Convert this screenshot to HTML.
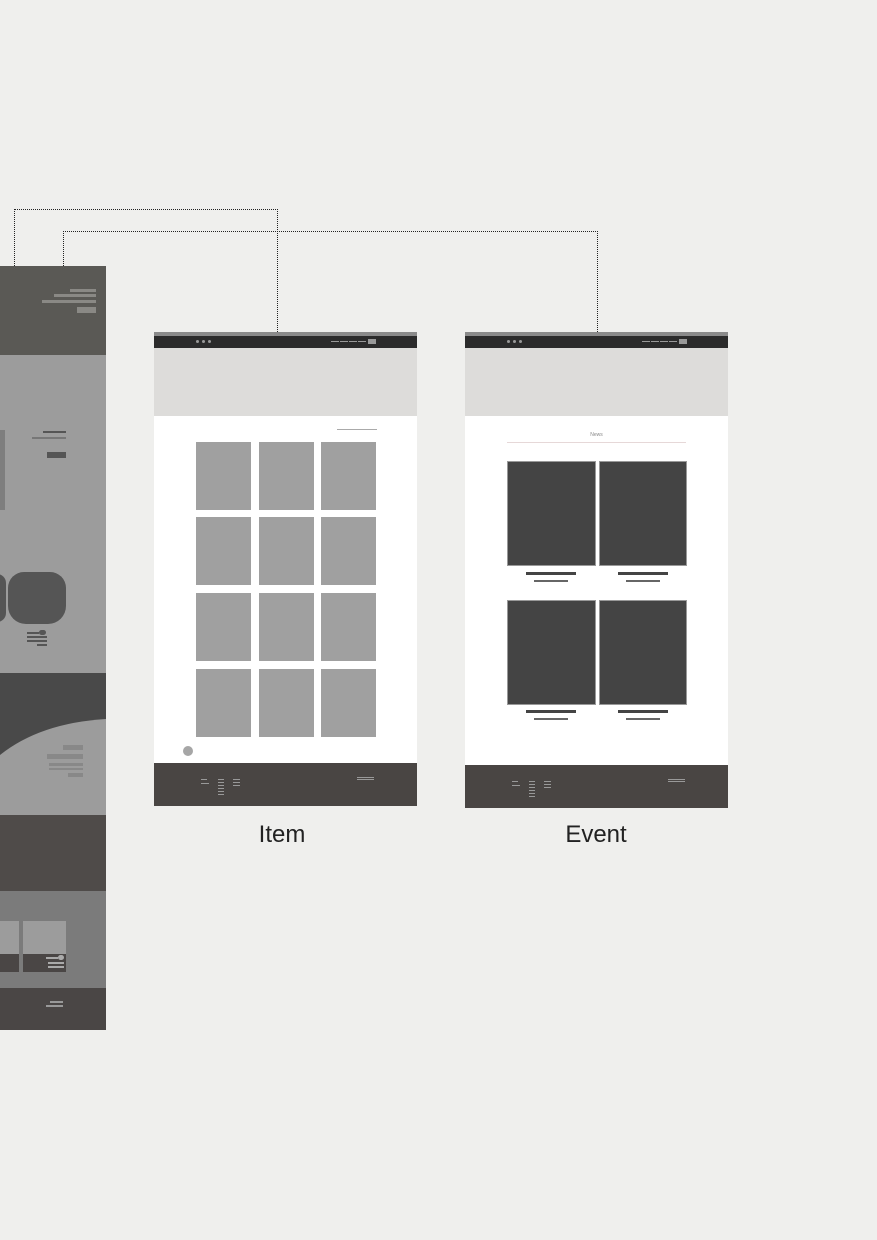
<!DOCTYPE html>
<html><head><meta charset="utf-8"><style>
*{margin:0;padding:0;box-sizing:border-box}
body{width:877px;height:1240px;background:#efefed;position:relative;overflow:hidden;font-family:"Liberation Sans",sans-serif}
.a{position:absolute}
.dl{position:absolute;border-color:#222;border-style:dotted;border-width:0}
</style></head><body>
<div class="dl" style="left:14px;top:209px;width:264px;height:1px;border-top-width:1px"></div>
<div class="dl" style="left:14px;top:209px;width:1px;height:57px;border-left-width:1px"></div>
<div class="dl" style="left:277px;top:209px;width:1px;height:123px;border-left-width:1px"></div>
<div class="dl" style="left:63px;top:231px;width:535px;height:1px;border-top-width:1px"></div>
<div class="dl" style="left:63px;top:231px;width:1px;height:35px;border-left-width:1px"></div>
<div class="dl" style="left:597px;top:231px;width:1px;height:101px;border-left-width:1px"></div>

<div class="a" style="left:0;top:266px;width:106px;height:764px;overflow:hidden">
 <div class="a" style="left:0;top:0;width:106px;height:89px;background:#5a5955"></div>
 <div class="a" style="left:70px;top:23px;width:26px;height:3px;background:#8a8985"></div>
 <div class="a" style="left:54px;top:28px;width:42px;height:3px;background:#8a8985"></div>
 <div class="a" style="left:42px;top:34px;width:54px;height:3px;background:#8a8985"></div>
 <div class="a" style="left:77px;top:41px;width:19px;height:6px;background:#8a8985"></div>
 <div class="a" style="left:0;top:89px;width:106px;height:318px;background:#9c9c9c"></div>
 <div class="a" style="left:0;top:164px;width:5px;height:80px;background:#7e7e7e"></div>
 <div class="a" style="left:43px;top:165px;width:23px;height:2px;background:#555"></div>
 <div class="a" style="left:32px;top:171px;width:34px;height:2px;background:#777"></div>
 <div class="a" style="left:47px;top:186px;width:19px;height:6px;background:#555"></div>
 <div class="a" style="left:-12px;top:308px;width:18px;height:48px;border-radius:10px;background:#555"></div>
 <div class="a" style="left:8px;top:306px;width:58px;height:52px;border-radius:16px 16px 18px 18px;background:#555"></div>
 <div class="a" style="left:27px;top:366px;width:12px;height:2px;background:#555"></div>
 <div class="a" style="left:39px;top:364px;width:7px;height:5px;border-radius:3px;background:#555"></div>
 <div class="a" style="left:27px;top:370px;width:20px;height:2px;background:#555"></div>
 <div class="a" style="left:27px;top:374px;width:20px;height:2px;background:#555"></div>
 <div class="a" style="left:37px;top:378px;width:10px;height:2px;background:#555"></div>
 <div class="a" style="left:0;top:407px;width:106px;height:142px;background:#494949"></div>
 <svg class="a" style="left:0;top:407px" width="106" height="142"><path d="M0 82 Q40 50 106 46 L106 142 L0 142Z" fill="#9c9c9c"/></svg>
 <div class="a" style="left:63px;top:479px;width:20px;height:5px;background:#888"></div>
 <div class="a" style="left:47px;top:488px;width:36px;height:5px;background:#888"></div>
 <div class="a" style="left:49px;top:497px;width:34px;height:3px;background:#888"></div>
 <div class="a" style="left:49px;top:502px;width:34px;height:2px;background:#888"></div>
 <div class="a" style="left:68px;top:507px;width:15px;height:4px;background:#888"></div>
 <div class="a" style="left:0;top:549px;width:106px;height:76px;background:#4f4b49"></div>
 <div class="a" style="left:0;top:625px;width:106px;height:97px;background:#7b7b7b"></div>
 <div class="a" style="left:0;top:655px;width:19px;height:33px;background:#9c9c9c"></div>
 <div class="a" style="left:0;top:688px;width:19px;height:18px;background:#4a4645"></div>
 <div class="a" style="left:23px;top:655px;width:43px;height:33px;background:#9c9c9c"></div>
 <div class="a" style="left:23px;top:688px;width:43px;height:18px;background:#4a4645"></div>
 <div class="a" style="left:46px;top:691px;width:12px;height:2px;background:#aaa"></div>
 <div class="a" style="left:58px;top:689px;width:6px;height:5px;border-radius:3px;background:#aaa"></div>
 <div class="a" style="left:48px;top:696px;width:16px;height:2px;background:#aaa"></div>
 <div class="a" style="left:48px;top:700px;width:16px;height:2px;background:#aaa"></div>
 <div class="a" style="left:0;top:722px;width:106px;height:42px;background:#4a4645"></div>
 <div class="a" style="left:50px;top:735px;width:13px;height:2px;background:#999"></div>
 <div class="a" style="left:46px;top:739px;width:17px;height:2px;background:#999"></div>
</div>

<div class="a" style="left:154px;top:332px;width:263px;height:474px;background:#fff">
 <div class="a" style="left:0;top:0;width:263px;height:4px;background:#8a8a8a"></div>
 <div class="a" style="left:0;top:4px;width:263px;height:12px;background:#2b2b2b"></div>
 <div class="a" style="left:42px;top:8px;width:3px;height:3px;border-radius:2px;background:#999;box-shadow:6px 0 #999,12px 0 #999"></div>
 <div class="a" style="left:177px;top:9px;width:8px;height:1px;background:#999;box-shadow:9px 0 #999,18px 0 #999,27px 0 #999"></div>
 <div class="a" style="left:214px;top:7px;width:8px;height:5px;background:#999"></div>
 <div class="a" style="left:0;top:16px;width:263px;height:68px;background:#dddcda"></div>
 <div class="a" style="left:183px;top:97px;width:40px;height:1px;background:#aaa"></div>
 <div class="a" style="left:0;top:431px;width:263px;height:43px;background:#494543"></div>
 <div class="a" style="left:29px;top:414px;width:10px;height:10px;border-radius:50%;background:#a6a6a6"></div>
 <div class="a" style="left:47px;top:447px;width:6px;height:1px;background:#999"></div>
 <div class="a" style="left:47px;top:451px;width:8px;height:1px;background:#999"></div>
 <div class="a" style="left:64px;top:447px;width:6px;height:16px;background:repeating-linear-gradient(#999 0 1px,transparent 1px 3px)"></div>
 <div class="a" style="left:79px;top:447px;width:7px;height:7px;background:repeating-linear-gradient(#999 0 1px,transparent 1px 3px)"></div>
 <div class="a" style="left:203px;top:445px;width:17px;height:4px;background:repeating-linear-gradient(#999 0 1px,transparent 1px 2px)"></div>
</div>

<div class="a" style="left:465px;top:332px;width:263px;height:476px;background:#fff">
 <div class="a" style="left:0;top:0;width:263px;height:4px;background:#8a8a8a"></div>
 <div class="a" style="left:0;top:4px;width:263px;height:12px;background:#2b2b2b"></div>
 <div class="a" style="left:42px;top:8px;width:3px;height:3px;border-radius:2px;background:#999;box-shadow:6px 0 #999,12px 0 #999"></div>
 <div class="a" style="left:177px;top:9px;width:8px;height:1px;background:#999;box-shadow:9px 0 #999,18px 0 #999,27px 0 #999"></div>
 <div class="a" style="left:214px;top:7px;width:8px;height:5px;background:#999"></div>
 <div class="a" style="left:0;top:16px;width:263px;height:68px;background:#dddcda"></div>
 <div class="a" style="left:0;top:100px;width:263px;text-align:center;font-size:5px;color:#888">News</div>
 <div class="a" style="left:42px;top:110px;width:179px;height:1px;background:#e6d8d8"></div>
 <div class="a" style="left:0;top:433px;width:263px;height:43px;background:#494543"></div>
 <div class="a" style="left:47px;top:449px;width:6px;height:1px;background:#999"></div>
 <div class="a" style="left:47px;top:453px;width:8px;height:1px;background:#999"></div>
 <div class="a" style="left:64px;top:449px;width:6px;height:16px;background:repeating-linear-gradient(#999 0 1px,transparent 1px 3px)"></div>
 <div class="a" style="left:79px;top:449px;width:7px;height:7px;background:repeating-linear-gradient(#999 0 1px,transparent 1px 3px)"></div>
 <div class="a" style="left:203px;top:447px;width:17px;height:4px;background:repeating-linear-gradient(#999 0 1px,transparent 1px 2px)"></div>
</div>

<div class="a" style="left:222px;top:821px;width:120px;text-align:center;font-size:24px;color:#222">Item</div>
<div class="a" style="left:536px;top:821px;width:120px;text-align:center;font-size:24px;color:#222">Event</div>

<div class="a" style="left:196px;top:442px;width:55px;height:68px;background:#a0a0a0"></div>
<div class="a" style="left:259px;top:442px;width:55px;height:68px;background:#a0a0a0"></div>
<div class="a" style="left:321px;top:442px;width:55px;height:68px;background:#a0a0a0"></div>
<div class="a" style="left:196px;top:517px;width:55px;height:68px;background:#a0a0a0"></div>
<div class="a" style="left:259px;top:517px;width:55px;height:68px;background:#a0a0a0"></div>
<div class="a" style="left:321px;top:517px;width:55px;height:68px;background:#a0a0a0"></div>
<div class="a" style="left:196px;top:593px;width:55px;height:68px;background:#a0a0a0"></div>
<div class="a" style="left:259px;top:593px;width:55px;height:68px;background:#a0a0a0"></div>
<div class="a" style="left:321px;top:593px;width:55px;height:68px;background:#a0a0a0"></div>
<div class="a" style="left:196px;top:669px;width:55px;height:68px;background:#a0a0a0"></div>
<div class="a" style="left:259px;top:669px;width:55px;height:68px;background:#a0a0a0"></div>
<div class="a" style="left:321px;top:669px;width:55px;height:68px;background:#a0a0a0"></div>

<div class="a" style="left:507px;top:461px;width:89px;height:105px;background:#444;border:1px solid #999"></div>
<div class="a" style="left:599px;top:461px;width:88px;height:105px;background:#444;border:1px solid #999"></div>
<div class="a" style="left:526px;top:572px;width:50px;height:3px;background:#444"></div>
<div class="a" style="left:534px;top:580px;width:34px;height:2px;background:#666"></div>
<div class="a" style="left:618px;top:572px;width:50px;height:3px;background:#444"></div>
<div class="a" style="left:626px;top:580px;width:34px;height:2px;background:#666"></div>
<div class="a" style="left:507px;top:600px;width:89px;height:105px;background:#444;border:1px solid #999"></div>
<div class="a" style="left:599px;top:600px;width:88px;height:105px;background:#444;border:1px solid #999"></div>
<div class="a" style="left:526px;top:710px;width:50px;height:3px;background:#444"></div>
<div class="a" style="left:534px;top:718px;width:34px;height:2px;background:#666"></div>
<div class="a" style="left:618px;top:710px;width:50px;height:3px;background:#444"></div>
<div class="a" style="left:626px;top:718px;width:34px;height:2px;background:#666"></div>
</body></html>
